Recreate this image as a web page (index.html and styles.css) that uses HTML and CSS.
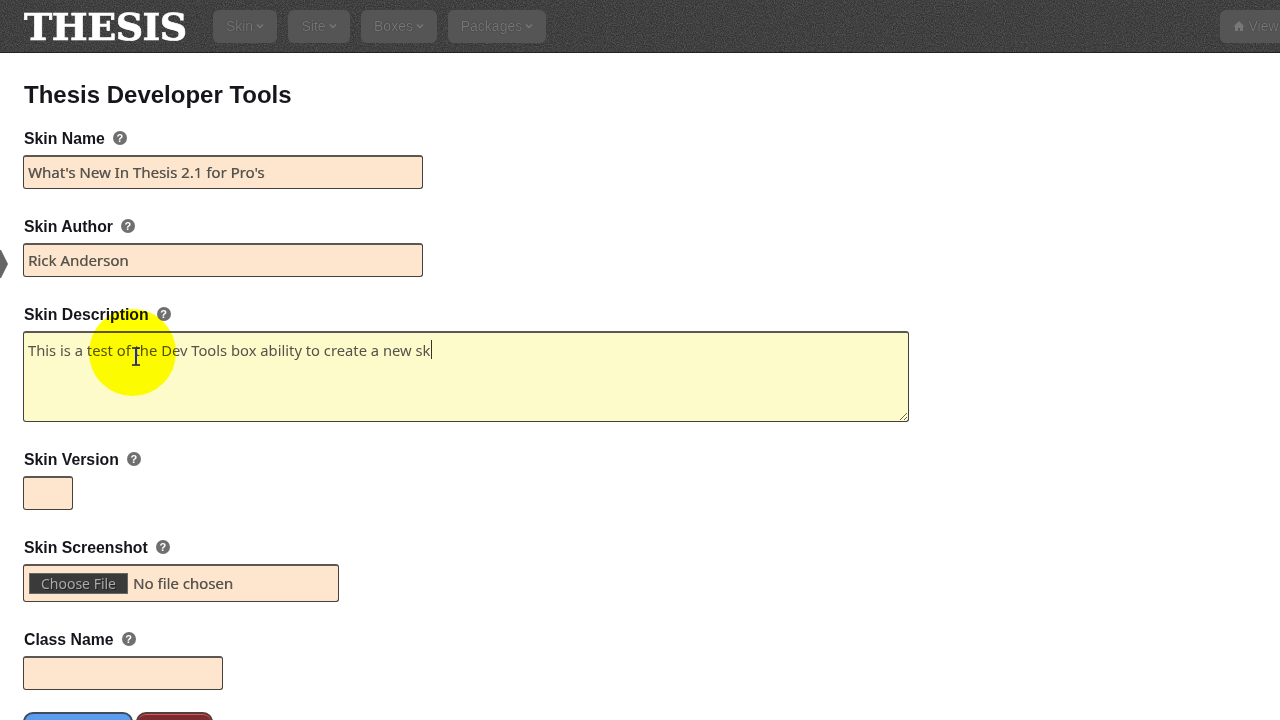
FILE: index.html
```html
<!DOCTYPE html>
<html lang="en">
<head>
<meta charset="utf-8">
<title>Thesis Developer Tools</title>
<link rel="stylesheet" href="styles.css">
</head>
<body>
<header class="topbar">
  <svg class="grain" aria-hidden="true"><filter id="grain-noise"><feTurbulence type="fractalNoise" baseFrequency="0.9" numOctaves="2" seed="4"/><feColorMatrix type="matrix" values="0 0 0 0 0.13  0 0 0 0 0.13  0 0 0 0 0.13  1 1 0 0 -0.75"/></filter><rect width="100%" height="100%" filter="url(#grain-noise)"/></svg>
  <div class="logo">THESIS</div>
  <nav class="menu">
    <a class="menu-btn skin">Skin <svg class="chev" viewBox="0 0 8 6"><path d="M1 1.500l3 3 3-3"/></svg></a>
    <a class="menu-btn site">Site <svg class="chev" viewBox="0 0 8 6"><path d="M1 1.500l3 3 3-3"/></svg></a>
    <a class="menu-btn boxes">Boxes <svg class="chev" viewBox="0 0 8 6"><path d="M1 1.500l3 3 3-3"/></svg></a>
    <a class="menu-btn packages">Packages <svg class="chev" viewBox="0 0 8 6"><path d="M1 1.500l3 3 3-3"/></svg></a>
  </nav>
  <a class="menu-btn view"><svg class="home" viewBox="0 0 12 12"><path d="M6 1L0.5 6.500H2V11h3V8h2v3h3V6.500h1.500z"/></svg> View Site</a>
</header>
<main class="content">
  <h1 class="title">Thesis Developer Tools</h1>
  <div class="field">
    <label class="label">Skin Name <span class="help">?</span></label>
    <input class="box w400" type="text" value="What's New In Thesis 2.1 for Pro's">
  </div>
  <div class="field">
    <label class="label">Skin Author <span class="help">?</span></label>
    <input class="box w400" type="text" value="Rick Anderson">
  </div>
  <div class="field field-desc">
    <label class="label">Skin Description <span class="help">?</span></label>
    <div class="area-wrap">
      <textarea class="box area">This is a test of the Dev Tools box ability to create a new sk</textarea>
      <span class="caret"></span>
    </div>
  </div>
  <div class="field">
    <label class="label">Skin Version <span class="help">?</span></label>
    <input class="box w50" type="text">
  </div>
  <div class="field field-file">
    <label class="label">Skin Screenshot <span class="help">?</span></label>
    <input class="box file" type="file">
  </div>
  <div class="field">
    <label class="label">Class Name <span class="help">?</span></label>
    <input class="box w200" type="text">
  </div>
  <div class="actions">
    <span class="btn blue"></span>
    <span class="btn red"></span>
  </div>
</main>
<div class="side-tab"></div>
<div class="spot"></div>
<svg class="ibeam" viewBox="0 0 10 20"><path class="ibeam-edge" d="M1 1h8M1 18h8"/><path class="ibeam-core" d="M5 1v17"/></svg>
</body>
</html>
```
FILE: styles.css
```css
* { box-sizing: border-box; }
html, body { margin: 0; height: 720px; overflow: hidden; background: #fff; }
body { font-family: "Liberation Sans", Arial, sans-serif; color: #111; }

.topbar {
  position: relative;
  display: flex;
  align-items: center;
  height: 53px;
  padding: 0 0 0 24px;
  background-color: #343434;
  border-bottom: 1px solid #222;
  overflow: hidden;
}
.grain { position: absolute; left: 0; top: 0; width: 100%; height: 100%; }
.logo {
  position: relative;
  width: 189px;
  margin-top: 2px;
  font-family: "DejaVu Serif", "Liberation Serif", serif;
  font-weight: 700;
  font-size: 38px;
  line-height: 1;
  letter-spacing: -.5px;
  color: #fff;
  -webkit-text-stroke: .7px #fff;
}
.menu { position: relative; display: flex; gap: 11px; }
.menu-btn {
  display: flex;
  align-items: center;
  justify-content: center;
  gap: 3px;
  height: 33px;
  border-radius: 6px;
  background: #555;
  color: #777;
  font-size: 14px;
  text-shadow: 0 0 1px #222;
}
.skin { width: 64px; }
.site { width: 62px; }
.boxes { width: 76px; }
.packages { width: 98px; }
.view {
  position: relative;
  margin-left: auto;
  margin-right: -40px;
  width: 100px;
}
.chev { width: 8px; height: 6px; fill: none; stroke: #777; stroke-width: 1.4; }
.home { width: 12px; height: 12px; fill: #777; }

.content { padding: 0 0 0 23px; }
.title {
  margin: 0;
  padding: 27px 0 0 1px;
  font-size: 24px;
  line-height: 29px;
  font-weight: 700;
  color: #15151c;
}
.field { margin-top: 21px; height: 67px; }
.field-desc { height: 124px; }
.field-file { height: 71px; }
.label {
  display: flex;
  align-items: center;
  gap: 8px;
  height: 18px;
  padding-left: 1px;
  margin-bottom: 7px;
  font-size: 15.8px;
  font-weight: 700;
  line-height: 18px;
  color: #15151c;
}
.help {
  display: flex;
  align-items: center;
  justify-content: center;
  width: 14px;
  height: 14px;
  margin-top: -2px;
  border-radius: 50%;
  background: #6f6f6f;
  color: #fff;
  font-size: 11px;
  line-height: 14px;
}
.box {
  display: block;
  margin: 0;
  height: 34px;
  padding: 0 4px 2px;
  border: 1px solid #45403c;
  border-top: 2px solid #5c5752;
  border-radius: 3px;
  background: #fde6cd;
  outline: none;
  font-family: "Noto Sans", "Open Sans", sans-serif;
  font-size: 15px;
  color: #55524c;
  text-shadow: .4px 0 0 #8a857d;
}
.w400 { width: 400px; }
.w200 { width: 200px; }
.w50 { width: 50px; }
.area-wrap { position: relative; width: 886px; }
.area {
  width: 886px;
  height: 91px;
  padding: 7px 4px;
  background: #fdfbc9;
  font-size: 14.75px;
  line-height: 20px;
  text-shadow: none;
  resize: both;
}
.caret {
  position: absolute;
  left: 408px;
  top: 9px;
  width: 1px;
  height: 19px;
  background: #333;
}
.file { width: 316px; height: 38px; padding: 7px 5px 0; }
.file::file-selector-button {
  width: 99px;
  height: 21px;
  margin: 0 5px 0 0;
  padding: 0;
  border: 1px solid #666;
  background: #3a3a3a;
  color: #aaa;
  font-family: "Noto Sans", sans-serif;
  font-size: 14px;
  text-shadow: 1px 1px 0 #222;
}
.actions { display: flex; gap: 3px; margin-top: 14px; }
.btn { display: block; height: 30px; border-radius: 10px; border: 2px solid #47505a; }
.blue { width: 110px; background: #5a9cf0; border-color: #3f4a5a; }
.red { width: 77px; background: #7a2c30; border-color: #5a3a3a; box-shadow: inset 0 1px 0 #d9535a; }

.side-tab {
  position: absolute;
  left: -6px;
  top: 250px;
  width: 14px;
  height: 28px;
  background: #666;
  clip-path: polygon(0 0, 50% 0, 100% 50%, 50% 100%, 0 100%);
}
.spot {
  position: absolute;
  left: 89px;
  top: 309px;
  width: 87px;
  height: 87px;
  border-radius: 50%;
  background: #ffff00;
  mix-blend-mode: multiply;
}
.ibeam {
  position: absolute;
  left: 131px;
  top: 347px;
  width: 10px;
  height: 20px;
  fill: none;
}
.ibeam-edge { stroke: #222; stroke-width: 1.5; }
.ibeam-core { stroke: #1c2bc0; stroke-width: 2; }
```
